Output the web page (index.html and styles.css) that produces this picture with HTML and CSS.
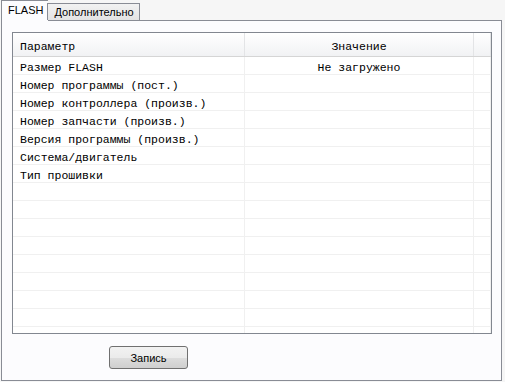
FILE: index.html
```html
<!DOCTYPE html>
<html lang="ru">
    <head>
        <meta charset="UTF-8" />
        <title>FLASH</title>
        <link rel="stylesheet" href="styles.css">
    </head>
    <body>
        <div class="window">
            <div class="tabs">
                <div class="tab active">FLASH</div>
                <div class="tab">Дополнительно</div>
            </div>
            <div class="panel">
                <div class="grid-box">
                    <div class="row head">
                        <div class="cell">Параметр</div>
                        <div class="cell center">Значение</div>
                        <div class="cell"></div>
                    </div>
                    <div class="row"><div class="cell">Размер FLASH</div><div class="cell center">Не загружено</div><div class="cell"></div></div>
                    <div class="row"><div class="cell">Номер программы (пост.)</div><div class="cell center"></div><div class="cell"></div></div>
                    <div class="row"><div class="cell">Номер контроллера (произв.)</div><div class="cell center"></div><div class="cell"></div></div>
                    <div class="row"><div class="cell">Номер запчасти (произв.)</div><div class="cell center"></div><div class="cell"></div></div>
                    <div class="row"><div class="cell">Версия программы (произв.)</div><div class="cell center"></div><div class="cell"></div></div>
                    <div class="row"><div class="cell">Система/двигатель</div><div class="cell center"></div><div class="cell"></div></div>
                    <div class="row"><div class="cell">Тип прошивки</div><div class="cell center"></div><div class="cell"></div></div>
                    <div class="row"><div class="cell"></div><div class="cell"></div><div class="cell"></div></div>
                    <div class="row"><div class="cell"></div><div class="cell"></div><div class="cell"></div></div>
                    <div class="row"><div class="cell"></div><div class="cell"></div><div class="cell"></div></div>
                    <div class="row"><div class="cell"></div><div class="cell"></div><div class="cell"></div></div>
                    <div class="row"><div class="cell"></div><div class="cell"></div><div class="cell"></div></div>
                    <div class="row"><div class="cell"></div><div class="cell"></div><div class="cell"></div></div>
                    <div class="row"><div class="cell"></div><div class="cell"></div><div class="cell"></div></div>
                    <div class="row"><div class="cell"></div><div class="cell"></div><div class="cell"></div></div>
                    <div class="row last"><div class="cell"></div><div class="cell"></div><div class="cell"></div></div>
                </div>
                <div class="actions">
                    <button class="btn">Запись</button>
                </div>
            </div>
        </div>
    </body>
</html>
```

FILE: styles.css
```css
body {
    margin: 0;
    background: #f6f6f6;
    font-family: "Liberation Sans", Arial, sans-serif;
    font-size: 11px;
    color: #000;
}
.window {
    width: 505px;
    height: 382px;
    padding-left: 1px;
    box-sizing: border-box;
}
.tabs {
    display: flex;
    align-items: flex-end;
    height: 20px;
    position: relative;
    z-index: 1;
}
.tab {
    height: 17px;
    line-height: 17px;
    padding: 0 5px 0 6px;
    border: 1px solid #898c95;
    border-bottom: none;
    background: linear-gradient(#f2f2f2, #e3e3e3);
    box-sizing: border-box;
    margin-left: -1px;
}
.tab.active {
    height: 21px;
    line-height: 19px;
    background: #fcfcfe;
    padding: 0 5px 0 6px;
    margin-bottom: -1px;
    border-right: none;
    margin-left: 0;
}
.panel {
    width: 501px;
    height: 361px;
    border: 1px solid #898c95;
    background: #fcfcfe;
    box-sizing: border-box;
    padding: 11px 0 0 10px;
}
.grid-box {
    width: 480px;
    height: 302px;
    border: 1px solid #828790;
    box-sizing: border-box;
    background: #fff;
    overflow: hidden;
    font-family: "Liberation Mono", "DejaVu Sans Mono", monospace;
    font-size: 11.5px;
}
.row {
    display: grid;
    grid-template-columns: 232px 229px 1fr;
    height: 18px;
    border-bottom: 1px solid #f0f0f0;
    box-sizing: border-box;
}
.row.head {
    height: 24px;
    background: linear-gradient(#ffffff, #f1f2f4);
    border-bottom: 1px solid #d5d5d5;
}
.row.last {
    border-bottom: none;
}
.cell {
    border-right: 1px solid #f0f0f0;
    padding: 2px 0 0 7px;
    line-height: 17px;
    white-space: nowrap;
    overflow: hidden;
}
.head .cell {
    padding-top: 5px;
    border-right-color: #e3e4e6;
}
.cell.center {
    text-align: center;
    padding-left: 0;
}
.actions {
    padding: 12px 0 0 97px;
}
.btn {
    width: 79px;
    height: 23px;
    border: 1px solid #707070;
    border-radius: 3px;
    background: linear-gradient(#f2f2f2 0%, #ebebeb 50%, #dddddd 51%, #cfcfcf 100%);
    font-family: "Liberation Sans", Arial, sans-serif;
    font-size: 11px;
    color: #000;
    padding: 0;
}
```
